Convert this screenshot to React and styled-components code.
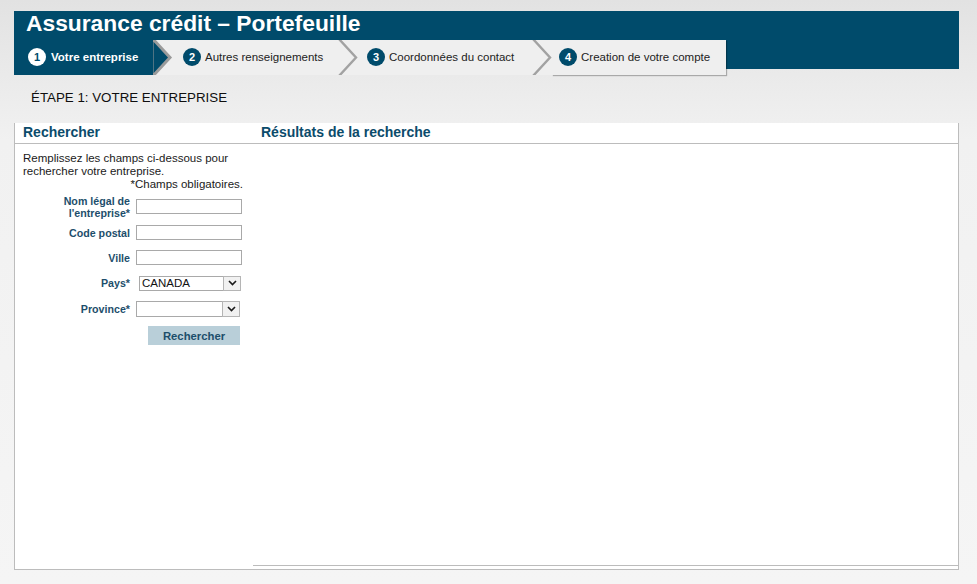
import React from "react";
import styled, { createGlobalStyle } from "styled-components";

const GlobalStyle = createGlobalStyle`
  html, body { margin: 0; padding: 0; }
  body {
    min-height: 584px;
    background: linear-gradient(to bottom, #e2e2e2 0px, #f1f1f1 140px, #f5f5f5 584px);
    font-family: "Liberation Sans", Arial, sans-serif;
  }
`;

const Page = styled.div`
  width: 945px;
  padding: 11px 18px 0 14px;
`;

const Header = styled.header`
  height: 58px;
  background: #004b6b;
`;

const Title = styled.h1`
  margin: 0;
  padding-left: 12px;
  font-size: 22.8px;
  line-height: 24px;
  font-weight: 700;
  color: #ffffff;
`;

const TabRow = styled.nav`
  display: flex;
  margin-top: 5px;
  height: 35px;
`;

const Tab = styled.div`
  box-sizing: border-box;
  width: ${(p) => p.$width}px;
  height: 35px;
  padding-left: ${(p) => p.$pad}px;
  padding-bottom: 1px;
  display: flex;
  align-items: center;
  gap: ${(p) => (p.$active ? 5 : 4)}px;
  background: ${(p) => (p.$active ? "#004b6b" : "#efefef")};
  color: ${(p) => (p.$active ? "#ffffff" : "#222222")};
  font-size: 11.5px;
  font-weight: ${(p) => (p.$active ? 700 : 400)};
  box-shadow: ${(p) => (p.$last ? "1px 1px 1px rgba(0,0,0,0.28)" : "none")};
`;

const Num = styled.span`
  width: 18px;
  height: 18px;
  border-radius: 50%;
  display: flex;
  align-items: center;
  justify-content: center;
  flex: none;
  font-size: 11px;
  font-weight: 700;
  background: ${(p) => (p.$active ? "#ffffff" : "#004b6b")};
  color: ${(p) => (p.$active ? "#004b6b" : "#ffffff")};
`;

const ChevronBox = styled.svg`
  display: block;
  flex: none;
  width: 20px;
  height: 35px;
  background: #efefef;
`;

const Chevron = ({ active }) => (
  <ChevronBox viewBox="0 0 20 35">
    {active ? (
      <polygon
        points="-1,-2 17,17.5 -1,37"
        fill="#004b6b"
        stroke="#9b9b9b"
        strokeWidth="3"
      />
    ) : (
      <polyline
        points="1,-1 18,17.5 1,36"
        fill="none"
        stroke="#a2a2a2"
        strokeWidth="2.4"
      />
    )}
  </ChevronBox>
);

const StepHeading = styled.h2`
  margin: 21px 0 17px 17px;
  font-size: 13.33px;
  line-height: 16px;
  font-weight: 400;
  color: #0f0f0f;
`;

const Panel = styled.section`
  background: #ffffff;
  border: 1px solid #bcbcbc;
  border-top: none;
  padding-bottom: 3px;
`;

const PanelHead = styled.div`
  display: grid;
  grid-template-columns: 238px 1fr;
  height: 20px;
  border-bottom: 1px solid #bcbcbc;
`;

const HeadTitle = styled.h3`
  margin: 0;
  padding-left: 8px;
  font-size: 14px;
  line-height: 19px;
  font-weight: 700;
  color: #0b4b6b;
`;

const PanelBody = styled.div`
  display: grid;
  grid-template-columns: 238px 1fr;
`;

const LeftCol = styled.div`
  padding: 8px 10px 0 8px;
`;

const RightCol = styled.div`
  box-sizing: border-box;
  height: 422px;
  border-bottom: 1px solid #bcbcbc;
`;

const Intro = styled.p`
  margin: 0;
  font-size: 11.5px;
  line-height: 13px;
  color: #1a1a1a;
`;

const Required = styled.p`
  margin: 0;
  text-align: right;
  font-size: 11.5px;
  line-height: 13px;
  color: #1a1a1a;
`;

const Form = styled.form`
  margin-top: 2px;
  display: grid;
  grid-template-columns: 107px 106px;
  grid-template-rows: 27px 25px 25px 26px 26px 27px;
  column-gap: 6px;
  align-items: center;
`;

const Label = styled.label`
  text-align: right;
  font-size: 10.67px;
  line-height: 12px;
  font-weight: 700;
  color: #1d4e6b;
`;

const TextInput = styled.input`
  box-sizing: border-box;
  width: 106px;
  height: 15px;
  margin: 0;
  padding: 0 2px;
  border: 1px solid #a9a9a9;
  background: #ffffff;
  font-size: 11px;
  font-family: inherit;
`;

const Select = styled.div`
  box-sizing: border-box;
  display: flex;
  width: ${(p) => p.$width}px;
  height: ${(p) => p.$height}px;
  margin-left: ${(p) => p.$offset}px;
  border: 1px solid #a9a9a9;
  background: #ffffff;
`;

const SelectValue = styled.span`
  flex: 1;
  padding-left: 2px;
  font-size: 11.5px;
  line-height: 13px;
  color: #111111;
`;

const SelectArrow = styled.span`
  box-sizing: border-box;
  width: 18px;
  display: flex;
  align-items: center;
  justify-content: center;
  border: 1px solid #b5b5b5;
  margin: -1px -1px -1px 0;
  background: #f1f1f1;
`;

const Arrow = () => (
  <svg width="9" height="6" viewBox="0 0 9 6">
    <path d="M1 1 L4.5 4.6 L8 1" fill="none" stroke="#1a1a1a" strokeWidth="1.6" />
  </svg>
);

const SearchButton = styled.button`
  grid-column: 2;
  justify-self: end;
  margin-right: 2px;
  width: 92px;
  height: 19px;
  padding: 0;
  border: none;
  background: #b9cfd9;
  font-family: inherit;
  font-size: 11.3px;
  font-weight: 700;
  color: #1d4e6b;
`;

const steps = [
  { n: 1, label: "Votre entreprise", width: 139, pad: 14 },
  { n: 2, label: "Autres renseignements", width: 165, pad: 10 },
  { n: 3, label: "Coordonnées du contact", width: 174, pad: 9 },
  { n: 4, label: "Creation de votre compte", width: 174, pad: 7 },
];

export default function App() {
  return (
    <>
      <GlobalStyle />
      <Page>
        <Header>
          <Title>Assurance crédit – Portefeuille</Title>
          <TabRow>
            {steps.map((s, i) => (
              <React.Fragment key={s.n}>
                <Tab
                  $width={s.width}
                  $pad={s.pad}
                  $active={i === 0}
                  $last={i === steps.length - 1}
                >
                  <Num $active={i === 0}>{s.n}</Num>
                  <span>{s.label}</span>
                </Tab>
                {i < steps.length - 1 && <Chevron active={i === 0} />}
              </React.Fragment>
            ))}
          </TabRow>
        </Header>

        <StepHeading>ÉTAPE 1: VOTRE ENTREPRISE</StepHeading>

        <Panel>
          <PanelHead>
            <HeadTitle>Rechercher</HeadTitle>
            <HeadTitle>Résultats de la recherche</HeadTitle>
          </PanelHead>
          <PanelBody>
            <LeftCol>
              <Intro>Remplissez les champs ci-dessous pour rechercher votre entreprise.</Intro>
              <Required>*Champs obligatoires.</Required>
              <Form onSubmit={(e) => e.preventDefault()}>
                <Label>
                  Nom légal de
                  <br />
                  l'entreprise*
                </Label>
                <TextInput type="text" />
                <Label>Code postal</Label>
                <TextInput type="text" />
                <Label>Ville</Label>
                <TextInput type="text" />
                <Label>Pays*</Label>
                <Select $width={102} $height={15} $offset={3}>
                  <SelectValue>CANADA</SelectValue>
                  <SelectArrow>
                    <Arrow />
                  </SelectArrow>
                </Select>
                <Label>Province*</Label>
                <Select $width={104} $height={16} $offset={0}>
                  <SelectValue></SelectValue>
                  <SelectArrow>
                    <Arrow />
                  </SelectArrow>
                </Select>
                <SearchButton type="submit">Rechercher</SearchButton>
              </Form>
            </LeftCol>
            <RightCol />
          </PanelBody>
        </Panel>
      </Page>
    </>
  );
}
